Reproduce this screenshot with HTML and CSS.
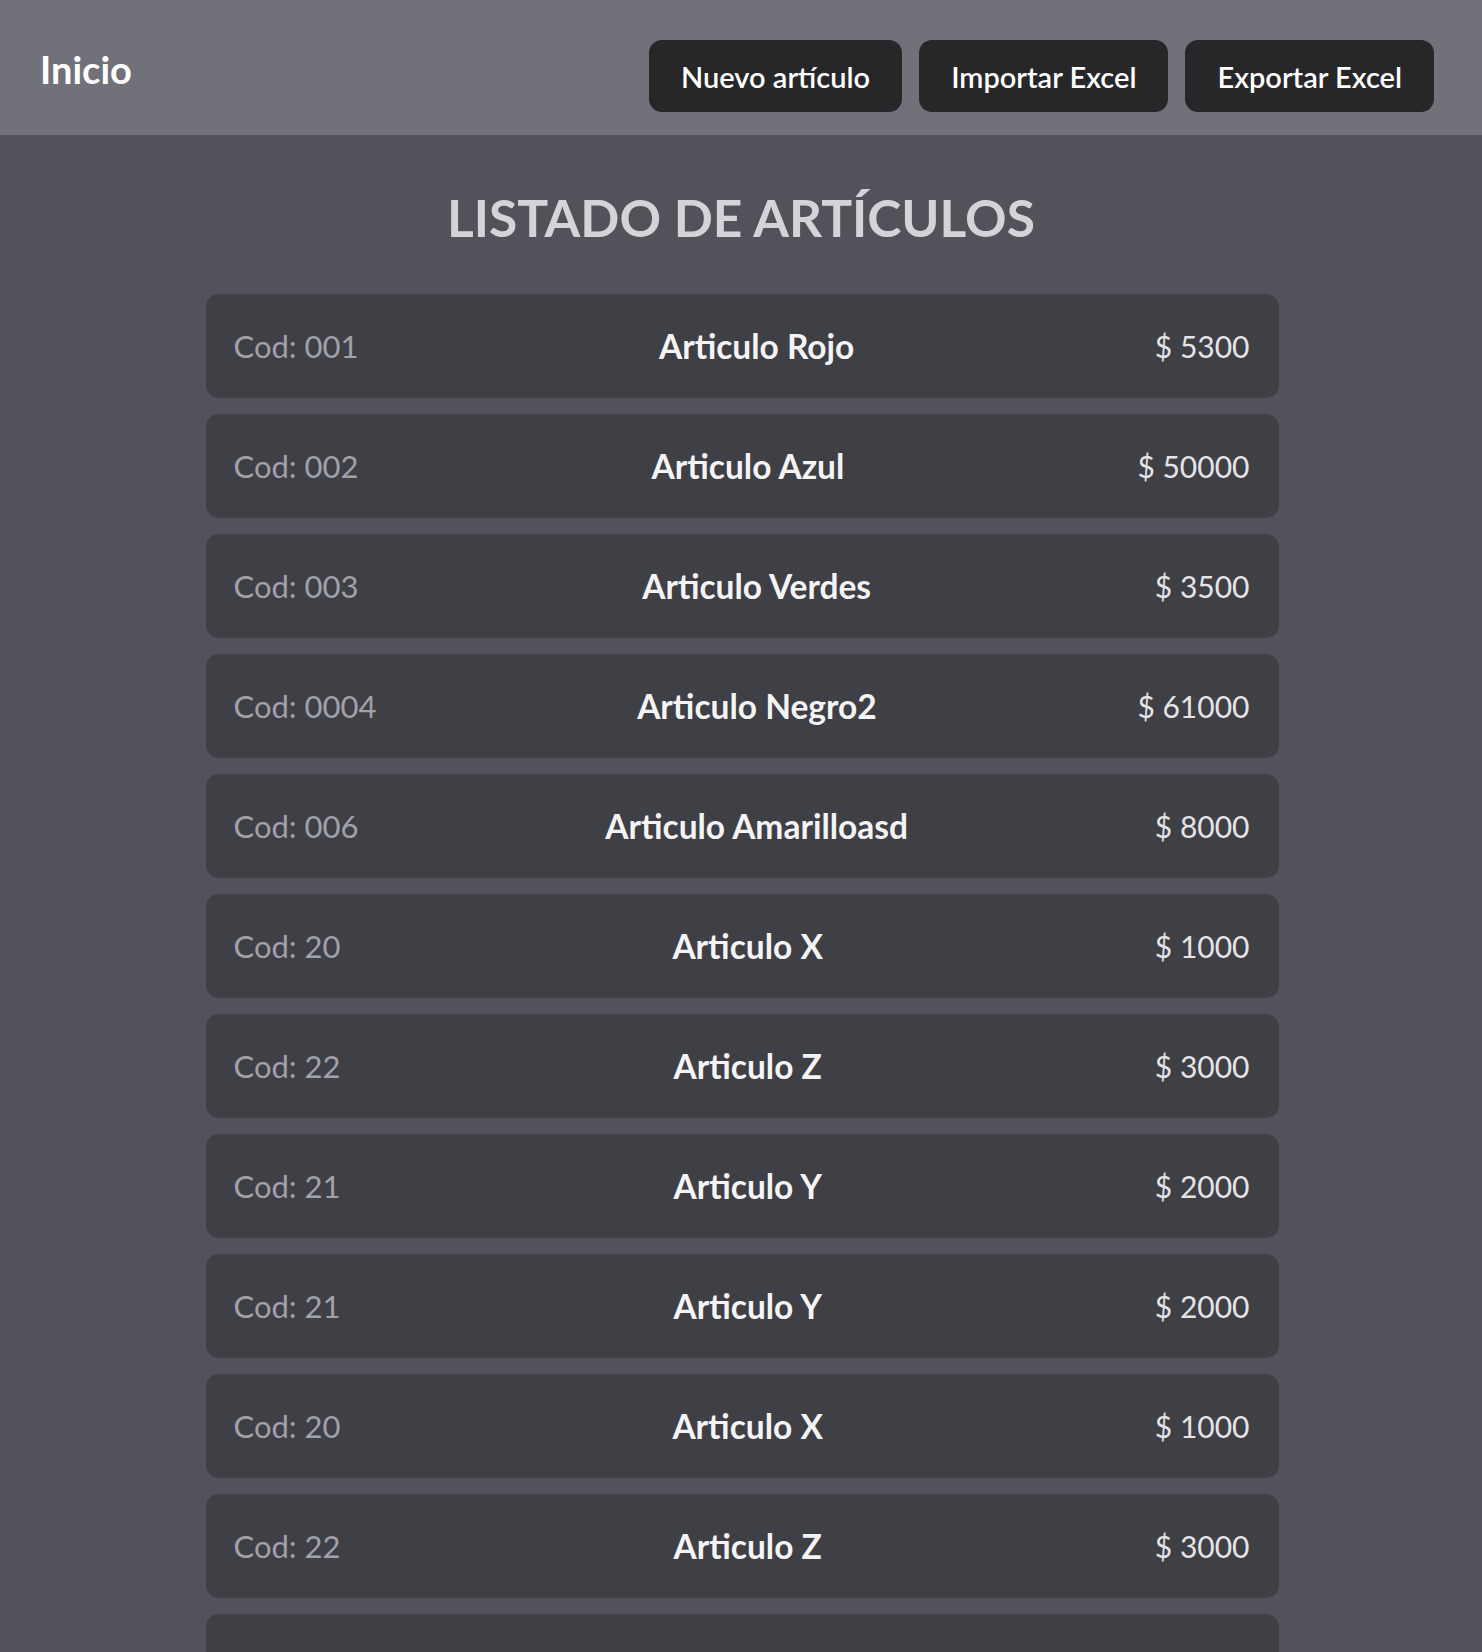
FILE: index.html
```html
<!DOCTYPE html>
<html lang="es">
<head>
<meta charset="utf-8">
<title>Listado de artículos</title>
<link rel="stylesheet" href="styles.css">
</head>
<body>
<header class="topbar">
  <a class="brand" href="#">Inicio</a>
  <nav class="actions">
    <button class="btn">Nuevo artículo</button>
    <button class="btn">Importar Excel</button>
    <button class="btn">Exportar Excel</button>
  </nav>
</header>
<main class="content">
  <h1 class="title">LISTADO DE ARTÍCULOS</h1>
  <ul class="list">
    <li class="item"><span class="code">Cod: 001</span><span class="name">Articulo Rojo</span><span class="price">$ 5300</span></li>
    <li class="item"><span class="code">Cod: 002</span><span class="name">Articulo Azul</span><span class="price">$ 50000</span></li>
    <li class="item"><span class="code">Cod: 003</span><span class="name">Articulo Verdes</span><span class="price">$ 3500</span></li>
    <li class="item"><span class="code">Cod: 0004</span><span class="name">Articulo Negro2</span><span class="price">$ 61000</span></li>
    <li class="item"><span class="code">Cod: 006</span><span class="name">Articulo Amarilloasd</span><span class="price">$ 8000</span></li>
    <li class="item"><span class="code">Cod: 20</span><span class="name">Articulo X</span><span class="price">$ 1000</span></li>
    <li class="item"><span class="code">Cod: 22</span><span class="name">Articulo Z</span><span class="price">$ 3000</span></li>
    <li class="item"><span class="code">Cod: 21</span><span class="name">Articulo Y</span><span class="price">$ 2000</span></li>
    <li class="item"><span class="code">Cod: 21</span><span class="name">Articulo Y</span><span class="price">$ 2000</span></li>
    <li class="item"><span class="code">Cod: 20</span><span class="name">Articulo X</span><span class="price">$ 1000</span></li>
    <li class="item"><span class="code">Cod: 22</span><span class="name">Articulo Z</span><span class="price">$ 3000</span></li>
    <li class="item"><span class="code">Cod: 21</span><span class="name">Articulo Y</span><span class="price">$ 2000</span></li>
    <li class="item"><span class="code">Cod: 20</span><span class="name">Articulo X</span><span class="price">$ 1000</span></li>
  </ul>
</main>
</body>
</html>
```

FILE: styles.css
```css
* { box-sizing: border-box; }

html, body {
  margin: 0;
  padding: 0;
}

body {
  background: #52525b;
  font-family: "Lato", "Open Sans", sans-serif;
  color: #f4f4f5;
}

.topbar {
  background: #71717a;
  height: 135px;
  display: flex;
  justify-content: space-between;
  align-items: flex-start;
  padding: 40px 48px 0 40px;
}

.brand {
  color: #ffffff;
  text-decoration: none;
  font-weight: 700;
  font-size: 38px;
  line-height: 40px;
  margin-top: 9px;
}

.actions {
  display: flex;
  gap: 17px;
}

.btn {
  background: #27272a;
  color: #ffffff;
  border: none;
  border-radius: 13px;
  height: 72px;
  padding: 0 32px;
  font-family: inherit;
  font-weight: 600;
  font-size: 29px;
  cursor: pointer;
}

.content {
  padding: 51px 0 40px;
}

.title {
  margin: 0 0 46px;
  text-align: center;
  color: #d4d4d8;
  font-size: 51.5px;
  line-height: 62px;
  font-weight: 700;
}

.list {
  list-style: none;
  margin: 0 auto;
  padding: 0;
  width: 1073px;
  display: flex;
  flex-direction: column;
  gap: 16px;
  position: relative;
  left: 1px;
}

.item {
  background: #3f3f46;
  border-radius: 13px;
  height: 104px;
  padding: 0 29px 0 28px;
  display: flex;
  justify-content: space-between;
  align-items: center;
  font-size: 31px;
}

.code {
  color: #a1a1aa;
}

.name {
  color: #f4f4f5;
  font-weight: 700;
  font-size: 33.5px;
}

.price {
  color: #e4e4e7;
  font-size: 30px;
}
```
